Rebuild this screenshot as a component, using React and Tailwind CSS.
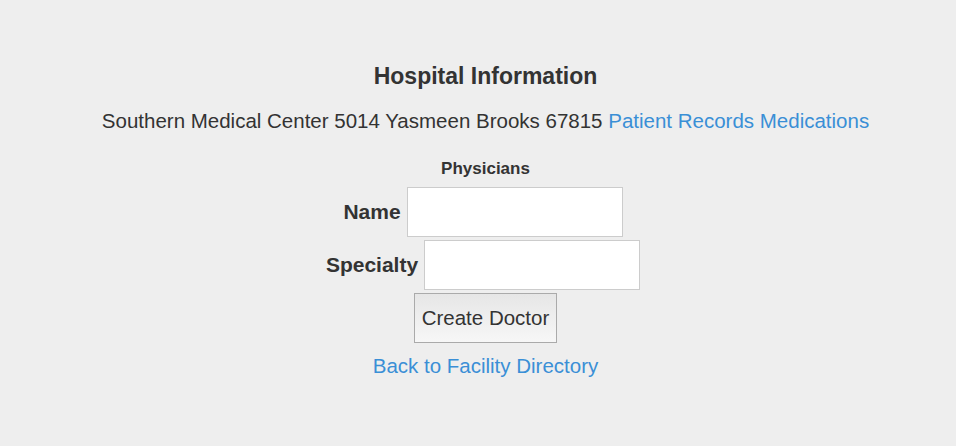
export default function App() {
  return (
    <div className="min-h-[446px] w-full bg-[#eeeeee] pl-[15px] text-[#333333]" style={{ fontFamily: '"Liberation Sans", Arial, sans-serif' }}>
      <div className="flex flex-col items-center pt-[63px]">
        <h1 className="h-[26px] text-[23px] leading-[26px] font-bold">Hospital Information</h1>
        <p className="mt-[20px] h-[24px] text-[20.5px] leading-[24px]">
          Southern Medical Center 5014 Yasmeen Brooks 67815{' '}
          <a className="text-[#3a8fd6]" href="#">Patient Records</a>{' '}
          <a className="text-[#3a8fd6]" href="#">Medications</a>
        </p>
        <h2 className="mt-[26px] h-[20px] text-[17px] leading-[20px] font-bold">Physicians</h2>
        <div className="mt-[8px] flex flex-col items-center gap-[3px]">
          <div className="mr-[5px] flex items-center gap-[6px]">
            <label className="text-[21px] font-bold">Name</label>
            <input className="h-[50px] w-[216px] border border-[#cccccc] bg-white" />
          </div>
          <div className="mr-[5px] flex items-center gap-[6px]">
            <label className="text-[21px] font-bold">Specialty</label>
            <input className="h-[50px] w-[216px] border border-[#cccccc] bg-white" />
          </div>
          <button className="h-[50px] w-[143px] border border-[#aaaaaa] bg-gradient-to-b from-[#e6e6e6] to-[#f7f7f7] text-[20.5px] text-[#333333]">Create Doctor</button>
        </div>
        <a className="mt-[11px] h-[24px] text-[20.5px] leading-[24px] text-[#3a8fd6]" href="#">Back to Facility Directory</a>
      </div>
    </div>
  );
}
